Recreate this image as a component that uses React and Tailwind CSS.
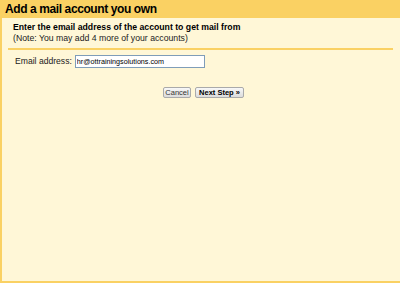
export default function App() {
  return (
    <div
      className="flex h-[283px] w-[400px] flex-col bg-[#fff7d7] text-[#222]"
      style={{ fontFamily: '"Liberation Sans", Arial, sans-serif' }}
    >
      <div className="h-[18px] bg-[#fad163] pl-[5px] text-[12px] font-bold leading-[18px] tracking-[-0.4px] text-black">
        Add a mail account you own
      </div>
      <div className="flex flex-1 flex-col border-b-2 border-l-2 border-[#fad163]">
        <div className="px-[11px] pt-[4px] text-[8.7px] leading-[11px]">
          <div className="font-bold text-black">Enter the email address of the account to get mail from</div>
          <div>(Note: You may add 4 more of your accounts)</div>
        </div>
        <div className="ml-[6px] mr-[7px] mt-[4px] h-[2px] bg-[#fad163]" />
        <div className="mt-[5px] flex items-center pl-[13px] text-[8.6px]">
          <span className="mr-[3px]">Email address:</span>
          <input
            className="h-[13px] w-[130px] border border-[#7f9db9] bg-white px-[1px] text-[7.2px] leading-[11px] text-black outline-none"
            defaultValue="hr@ottrainingsolutions.com"
          />
        </div>
        <div className="mt-[19px] flex justify-center gap-[4px] pl-[5px]">
          <button className="h-[11px] w-[28px] rounded-[2px] border border-[#aaa] bg-gradient-to-b from-[#f8f8f8] to-[#dcdcdc] p-0 text-[7.5px] leading-[9px] text-[#333]">
            Cancel
          </button>
          <button className="h-[11px] w-[49px] rounded-[2px] border border-[#aaa] bg-gradient-to-b from-[#f8f8f8] to-[#dcdcdc] p-0 text-[7.5px] font-bold leading-[9px] text-black">
            Next Step »
          </button>
        </div>
      </div>
    </div>
  );
}
